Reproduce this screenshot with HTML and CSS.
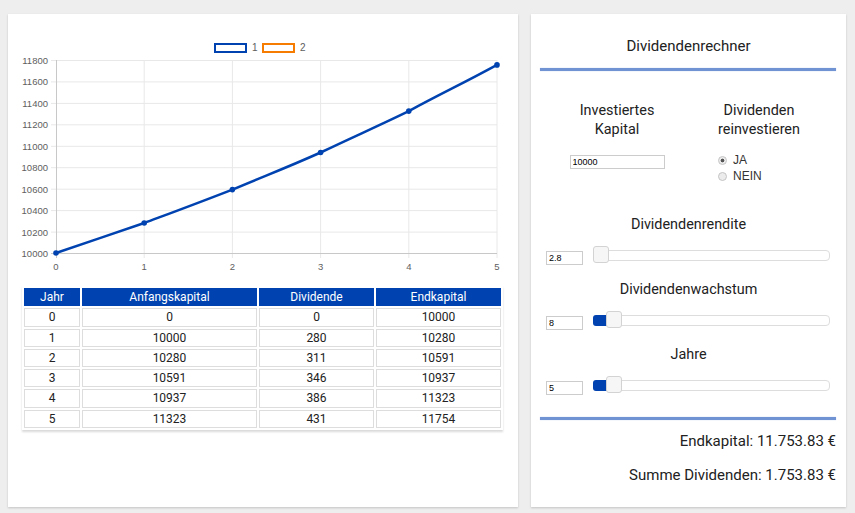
FILE: index.html
```html
<!doctype html>
<html>
  <head>
    <meta charset='utf-8'>
    <title>Dividendenrechner</title>
    <link rel="stylesheet" href="styles.css">
  </head>
  <body>
    <div class="page">

      <div class="card chart-card">
        <svg class="chart" width="510" height="272" viewBox="0 0 510 272">
          <!-- legend -->
          <rect x="207" y="30" width="31" height="8" fill="#fff" stroke="#0043b0" stroke-width="2"/>
          <text x="244" y="37" class="legend">1</text>
          <rect x="255" y="30" width="31" height="8" fill="#fff" stroke="#f57c00" stroke-width="2"/>
          <text x="292" y="37" class="legend">2</text>

          <!-- grid -->
          <g stroke="#e8e8e8" stroke-width="1">
            <line x1="43" y1="46.5" x2="489" y2="46.5"/>
            <line x1="43" y1="67.9" x2="489" y2="67.9"/>
            <line x1="43" y1="89.4" x2="489" y2="89.4"/>
            <line x1="43" y1="110.8" x2="489" y2="110.8"/>
            <line x1="43" y1="132.3" x2="489" y2="132.3"/>
            <line x1="43" y1="153.7" x2="489" y2="153.7"/>
            <line x1="43" y1="175.2" x2="489" y2="175.2"/>
            <line x1="43" y1="196.6" x2="489" y2="196.6"/>
            <line x1="43" y1="218.1" x2="489" y2="218.1"/>
            <line x1="136.2" y1="46" x2="136.2" y2="244"/>
            <line x1="224.4" y1="46" x2="224.4" y2="244"/>
            <line x1="312.6" y1="46" x2="312.6" y2="244"/>
            <line x1="400.8" y1="46" x2="400.8" y2="244"/>
            <line x1="489" y1="46" x2="489" y2="244"/>
          </g>
          <g stroke="#c8c8c8" stroke-width="1">
            <line x1="48.5" y1="46" x2="48.5" y2="244"/>
            <line x1="43" y1="239.5" x2="489" y2="239.5"/>
          </g>

          <!-- y axis -->
          <g class="tick" text-anchor="end">
            <text x="40" y="49.5">11800</text>
            <text x="40" y="71">11600</text>
            <text x="40" y="92.5">11400</text>
            <text x="40" y="114">11200</text>
            <text x="40" y="135.5">11000</text>
            <text x="40" y="157">10800</text>
            <text x="40" y="178.5">10600</text>
            <text x="40" y="200">10400</text>
            <text x="40" y="221.5">10200</text>
            <text x="40" y="243">10000</text>
          </g>
          <!-- x axis -->
          <g class="tick" text-anchor="middle">
            <text x="48" y="255.5">0</text>
            <text x="136.2" y="255.5">1</text>
            <text x="224.4" y="255.5">2</text>
            <text x="312.6" y="255.5">3</text>
            <text x="400.8" y="255.5">4</text>
            <text x="489" y="255.5">5</text>
          </g>

          <!-- dataset 1 -->
          <path d="M48 239 C83 227 101 221 136.2 209 C171 196 190 189 224.4 175.6 C259 161 278 154 312.6 138.5 C347 122 366 114 400.8 97.1 C436 78 454 70 489 50.9"
                fill="none" stroke="#0043b0" stroke-width="2.5" stroke-linejoin="round"/>
          <g fill="#0043b0">
            <circle cx="48" cy="239" r="2.8"/>
            <circle cx="136.2" cy="209" r="2.8"/>
            <circle cx="224.4" cy="175.6" r="2.8"/>
            <circle cx="312.6" cy="138.5" r="2.8"/>
            <circle cx="400.8" cy="97.1" r="2.8"/>
            <circle cx="489" cy="50.9" r="2.8"/>
          </g>
        </svg>

        <table class="results">
          <colgroup>
            <col class="c-jahr">
            <col class="c-anfang">
            <col class="c-div">
            <col class="c-end">
          </colgroup>
          <thead>
            <tr><th>Jahr</th><th>Anfangskapital</th><th>Dividende</th><th>Endkapital</th></tr>
          </thead>
          <tbody>
            <tr><td>0</td><td>0</td><td>0</td><td>10000</td></tr>
            <tr><td>1</td><td>10000</td><td>280</td><td>10280</td></tr>
            <tr><td>2</td><td>10280</td><td>311</td><td>10591</td></tr>
            <tr><td>3</td><td>10591</td><td>346</td><td>10937</td></tr>
            <tr><td>4</td><td>10937</td><td>386</td><td>11323</td></tr>
            <tr><td>5</td><td>11323</td><td>431</td><td>11754</td></tr>
          </tbody>
        </table>
      </div>

      <div class="card calc-card">
        <h2 class="calc-title">Dividendenrechner</h2>
        <div class="rule"></div>

        <div class="columns">
          <div class="col">
            <div class="label">Investiertes<br>Kapital</div>
            <input class="num num-wide" type="text" value="10000">
          </div>
          <div class="col">
            <div class="label">Dividenden<br>reinvestieren</div>
            <div class="radios">
              <label class="radio"><input type="radio" name="re" checked> JA</label>
              <label class="radio"><input type="radio" name="re"> NEIN</label>
            </div>
          </div>
        </div>

        <div class="field first">
          <div class="label">Dividendenrendite</div>
          <div class="slider-row">
            <input class="num" type="text" value="2.8">
            <div class="slider">
              <div class="slider-handle" style="left:-1px"></div>
            </div>
          </div>
        </div>

        <div class="field">
          <div class="label">Dividendenwachstum</div>
          <div class="slider-row">
            <input class="num" type="text" value="8">
            <div class="slider">
              <div class="slider-range" style="width:14px"></div>
              <div class="slider-handle" style="left:12px"></div>
            </div>
          </div>
        </div>

        <div class="field">
          <div class="label">Jahre</div>
          <div class="slider-row">
            <input class="num" type="text" value="5">
            <div class="slider">
              <div class="slider-range" style="width:14px"></div>
              <div class="slider-handle" style="left:12px"></div>
            </div>
          </div>
        </div>

        <div class="rule rule-bottom"></div>

        <div class="sum first">Endkapital: 11.753.83 €</div>
        <div class="sum">Summe Dividenden: 1.753.83 €</div>
      </div>

    </div>
  </body>
</html>
```

FILE: styles.css
```css
body {
  margin: 0;
  background: #eee;
  font-family: Roboto, 'Liberation Sans', sans-serif;
  color: #222;
}

.page {
  display: flex;
  gap: 13px;
  padding: 14px 8px 6px;
}

.card {
  background: #fff;
  height: 493px;
  box-shadow: 0 1px 2px rgba(0,0,0,0.18);
}
.chart-card { width: 510px; }
.calc-card { width: 315px; }

/* chart */
.chart { display: block; }
.chart text {
  font-family: 'Liberation Sans', Arial, sans-serif;
  font-size: 9.5px;
  fill: #5e5e5e;
}
.chart .legend { font-size: 10px; }

/* table */
.results {
  margin-left: 14px;
  width: 481px;
  table-layout: fixed;
  border-collapse: separate;
  border-spacing: 2px;
  font-size: 12px;
  text-align: center;
  box-shadow: 0 2px 2px rgba(0,0,0,0.15);
}
.c-jahr { width: 56px; }
.c-anfang { width: 175px; }
.c-div { width: 115px; }
.c-end { width: 125px; }
.results th,
.results td {
  padding: 0;
  line-height: 16.3px;
}
.results th {
  background: #0043b0;
  border: 1px solid #0043b0;
  color: #fff;
  font-weight: 400;
}
.results td {
  border: 1px solid #ddd;
  color: #222;
}

/* calculator */
.calc-title {
  margin: 0;
  padding-top: 22px;
  font-size: 15px;
  font-weight: 400;
  line-height: 20px;
  text-align: center;
}
.rule {
  height: 3px;
  margin: 12px 10px 0 9px;
  background: #6f93d3;
  box-shadow: 0 0 1px rgba(80,120,200,0.6);
}
.rule-bottom { margin-top: 22px; }

.label {
  font-size: 14.4px;
  line-height: 19px;
  text-align: center;
}

.columns {
  display: flex;
  padding: 0 16px 0 15px;
  margin-top: 30px;
}
.columns .col {
  width: 142px;
  display: flex;
  flex-direction: column;
  align-items: center;
}
.num {
  box-sizing: border-box;
  width: 37px;
  height: 14px;
  margin: 0;
  padding: 0 2px;
  border: 1px solid #ccc;
  font-family: 'Liberation Sans', Arial, sans-serif;
  font-size: 9px;
  color: #000;
  outline: none;
}
.num-wide {
  width: 95px;
  margin-top: 16px;
}

.radios {
  align-self: flex-start;
  margin: 13px 0 0 30px;
}
.radio {
  display: flex;
  align-items: center;
  height: 16px;
  font-family: 'Liberation Sans', Arial, sans-serif;
  font-size: 12px;
  color: #333;
}
.radio input {
  -webkit-appearance: none;
  appearance: none;
  width: 9px;
  height: 9px;
  margin: 0 6px 0 0;
  border: 1px solid #c4c4c4;
  border-radius: 50%;
  background: #ececec;
}
.radio input:checked {
  background: radial-gradient(circle, #555 0, #555 1.6px, #ececec 2.2px);
}

.field { margin-top: 15px; }
.field.first { margin-top: 31px; }
.slider-row {
  display: flex;
  align-items: flex-start;
  margin-top: 17px;
  padding-left: 15px;
}
.slider {
  position: relative;
  box-sizing: border-box;
  width: 237px;
  height: 11px;
  margin: -1px 0 0 10px;
  border: 1px solid #ddd;
  border-radius: 4px;
  background: #fff;
}
.slider-range {
  position: absolute;
  left: -1px;
  top: -1px;
  height: 11px;
  border-radius: 3px 0 0 3px;
  background: #0043b0;
}
.slider-handle {
  position: absolute;
  top: -5px;
  box-sizing: border-box;
  width: 16px;
  height: 17px;
  border: 1px solid #d3d3d3;
  border-radius: 3px;
  background: #f6f6f6;
}

.sum {
  margin-top: 15px;
  padding-right: 10px;
  font-size: 15px;
  line-height: 19px;
  text-align: right;
}
.sum.first { margin-top: 12px; }
```
